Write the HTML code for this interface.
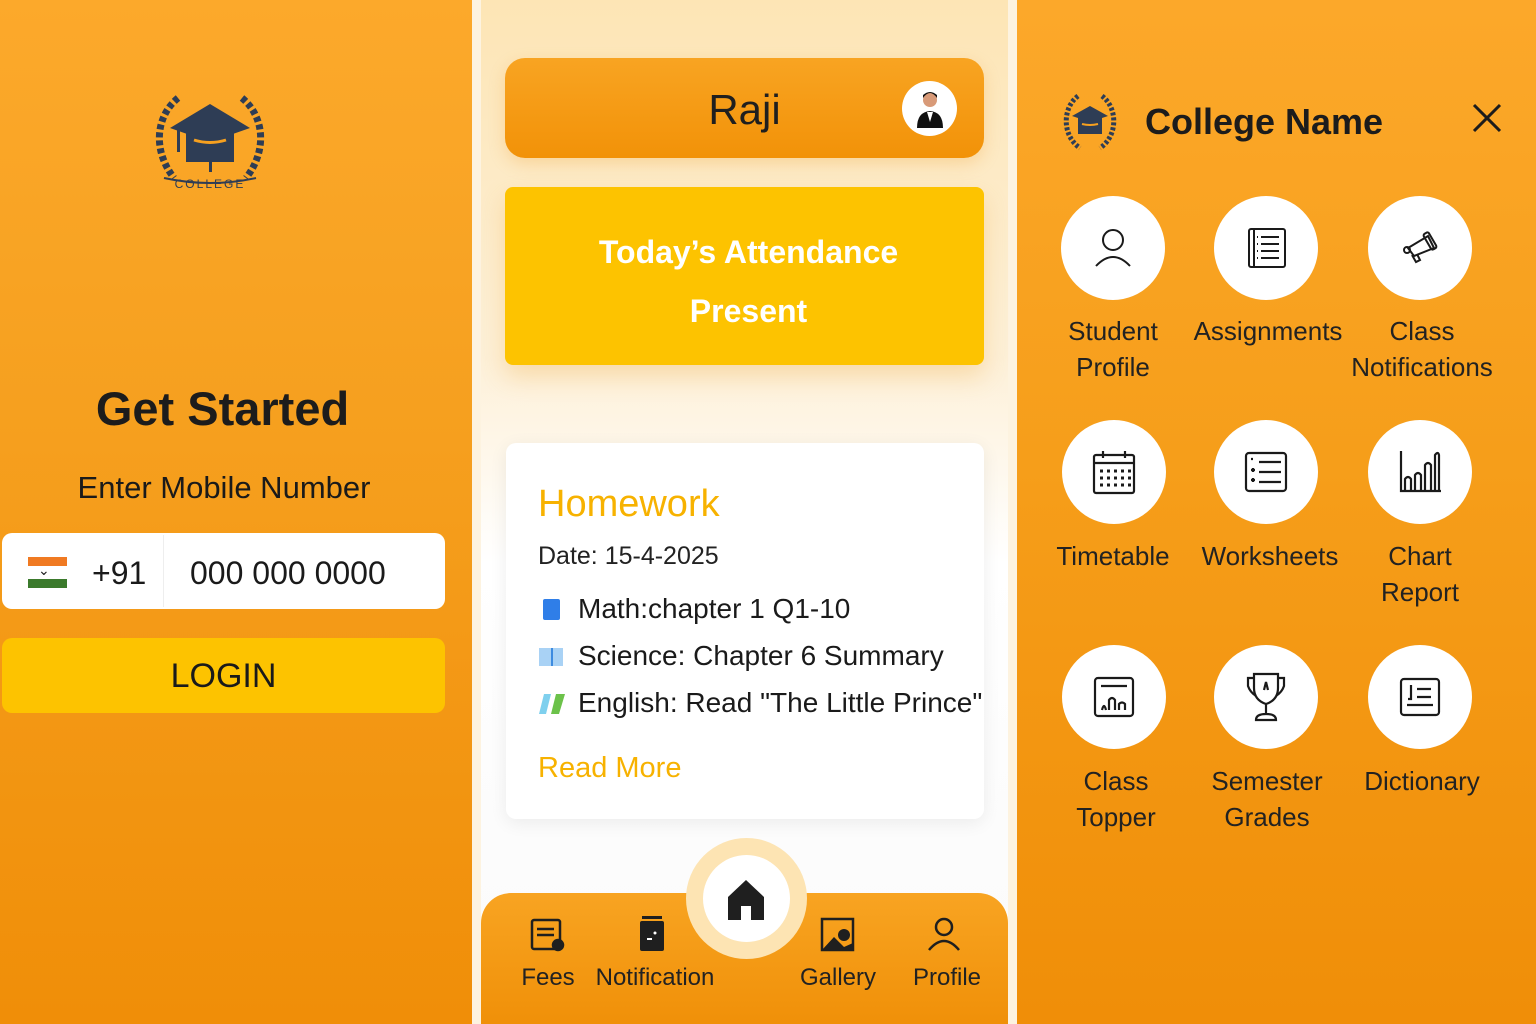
<!DOCTYPE html>
<html><head><meta charset="utf-8"><style>
*{margin:0;padding:0;box-sizing:border-box}
body{width:1536px;height:1024px;position:relative;overflow:hidden;background:#fdf3e0;font-family:"Liberation Sans",sans-serif;color:#1a1a1a}
.a{position:absolute}
.t{position:absolute;white-space:nowrap;text-align:center}
.p1{left:0;top:0;width:472px;height:1024px;background:linear-gradient(180deg,#fca92b 0%,#f6a01f 40%,#f08e08 100%)}
.p2{left:481px;top:0;width:527px;height:1024px;background:linear-gradient(180deg,#fde5b5 0%,#fdf0d8 35%,#ffffff 55%,#fafafa 100%)}
.p3{left:1017px;top:0;width:519px;height:1024px;background:linear-gradient(180deg,#fca82a 0%,#f69e1a 45%,#f08e08 100%)}
.c{position:absolute;width:104px;height:104px;border-radius:50%;background:#fff;display:flex;align-items:center;justify-content:center}
.lb{position:absolute;width:180px;text-align:center;font-size:26px;line-height:36px;color:#222}
.nv{position:absolute;font-size:24px;color:#222;text-align:center;width:130px}
</style></head><body>
<div class="a p1"></div>
<div class="a p2"></div>
<div class="a p3"></div>

<!-- LEFT -->
<svg class="a" style="left:148px;top:92px" width="124" height="104" viewBox="0 0 124 104">
 <g fill="none" stroke="#2e3d55" stroke-width="7" stroke-dasharray="5 3">
  <path d="M30 6 C8 24 4 58 26 86"/><path d="M94 6 C116 24 120 58 98 86"/>
 </g>
 <path d="M16 86 Q62 96 108 86" stroke="#2e3d55" stroke-width="2" fill="none"/>
 <polygon points="62,12 102,36 62,50 22,36" fill="#2e3d55"/>
 <rect x="38" y="38" width="48" height="32" fill="#2e3d55"/>
 <path d="M46 48 Q62 53 78 48" stroke="#f6a01f" stroke-width="3" fill="none"/>
 <rect x="29" y="38" width="3" height="22" fill="#2e3d55"/>
 <rect x="61" y="70" width="3" height="10" fill="#2e3d55"/>
 <text x="62" y="96" font-size="12" text-anchor="middle" fill="#2e3d55" font-family="Liberation Sans" letter-spacing="2">COLLEGE</text>
</svg>
<div class="t" style="left:0;width:445px;top:379px;font-size:47px;font-weight:bold;line-height:60px;color:#1c1c1c">Get Started</div>
<div class="t" style="left:0;width:448px;top:468px;font-size:31px;line-height:40px">Enter Mobile Number</div>
<div class="a" style="left:2px;top:533px;width:443px;height:76px;background:#fff;border-radius:10px"></div>
<div class="a" style="left:163px;top:535px;width:1px;height:72px;background:#eee"></div>
<div class="a" style="left:28px;top:557px;width:39px;height:9px;background:#f07a22"></div>
<div class="a" style="left:28px;top:579px;width:39px;height:9px;background:#3b7a2c"></div>
<div class="t" style="left:38px;top:562px;font-size:14px;line-height:16px">⌄</div>
<div class="t" style="left:92px;top:554px;font-size:32px;line-height:38px">+91</div>
<div class="t" style="left:190px;top:554px;font-size:32px;line-height:38px">000 000 0000</div>
<div class="a" style="left:2px;top:638px;width:443px;height:75px;background:#fdc300;border-radius:10px"></div>
<div class="t" style="left:2px;width:443px;top:656px;font-size:34px;line-height:40px">LOGIN</div>

<!-- MIDDLE -->
<div class="a" style="left:505px;top:58px;width:479px;height:100px;border-radius:20px;background:linear-gradient(180deg,#f8a422,#f29208);box-shadow:0 6px 16px rgba(240,150,30,.25)"></div>
<div class="t" style="left:505px;width:479px;top:85px;font-size:42px;line-height:50px;color:#1f1f1f">Raji</div>
<div class="a" style="left:902px;top:81px;width:55px;height:55px;border-radius:50%;background:#fff"></div>
<svg class="a" style="left:914px;top:88px" width="32" height="42" viewBox="0 0 32 42"><circle cx="16" cy="12" r="7" fill="#d89a78"/><path d="M9 10 Q16 0 23 10 L23 7 Q16 1 9 7Z" fill="#111"/><path d="M3 40 Q3 24 16 23 Q29 24 29 40Z" fill="#111"/><path d="M13 24 L16 34 L19 24Z" fill="#fff"/></svg>
<div class="a" style="left:505px;top:187px;width:479px;height:178px;background:#fdc300;border-radius:8px;box-shadow:0 12px 24px rgba(240,170,60,.3)"></div>
<div class="t" style="left:505px;width:487px;top:232px;font-size:32px;line-height:40px;color:#fff;font-weight:bold">Today’s Attendance</div>
<div class="t" style="left:505px;width:487px;top:291px;font-size:32px;line-height:40px;color:#fff;font-weight:bold">Present</div>
<div class="a" style="left:506px;top:443px;width:478px;height:376px;background:#fff;border-radius:10px;box-shadow:0 4px 18px rgba(0,0,0,.07)"></div>
<div class="t" style="left:538px;top:482px;font-size:38px;line-height:44px;color:#f7b200">Homework</div>
<div class="t" style="left:538px;top:541px;font-size:25px;line-height:30px;color:#222">Date: 15-4-2025</div>
<div class="a" style="left:543px;top:599px;width:17px;height:21px;background:#2f7ee8;border-radius:2px"></div>
<div class="a" style="left:539px;top:648px;width:24px;height:18px;background:#a9d2f5"></div>
<div class="a" style="left:551px;top:648px;width:2px;height:18px;background:#3d8be0"></div>
<svg class="a" style="left:539px;top:694px" width="26" height="20"><polygon points="5,0 12,0 7,20 0,20" fill="#7fd0ee"/><polygon points="17,0 26,0 20,20 12,20" fill="#6cc24a"/></svg>
<div class="t" style="left:578px;top:592px;font-size:28px;line-height:34px">Math:chapter 1 Q1-10</div>
<div class="t" style="left:578px;top:639px;font-size:28px;line-height:34px">Science: Chapter 6 Summary</div>
<div class="t" style="left:578px;top:686px;font-size:28px;line-height:34px">English: Read "The Little Prince"</div>
<div class="t" style="left:538px;top:751px;font-size:29px;line-height:34px;color:#f7b200">Read More</div>
<div class="a" style="left:481px;top:893px;width:527px;height:131px;border-radius:30px 30px 0 0;background:linear-gradient(180deg,#f8a422,#f09008)"></div>
<div class="a" style="left:686px;top:838px;width:121px;height:121px;border-radius:50%;background:#fde4b3"></div>
<div class="a" style="left:703px;top:855px;width:87px;height:87px;border-radius:50%;background:#fff"></div>
<svg class="a" style="left:727px;top:879px" width="38" height="42" viewBox="0 0 38 42"><path d="M19 1 L37 18 L37 41 L24 41 L24 27 L14 27 L14 41 L1 41 L1 18Z" fill="#1f1f1f"/></svg>
<svg class="a" style="left:530px;top:918px" width="36" height="34" viewBox="0 0 36 34" fill="none" stroke="#1f1f1f" stroke-width="2.5"><rect x="2" y="2" width="28" height="29" rx="2"/><path d="M7 11H24M7 17H24"/><circle cx="28" cy="27" r="5" fill="#1f1f1f"/></svg>
<svg class="a" style="left:638px;top:914px" width="28" height="38" viewBox="0 0 28 38"><rect x="4" y="2" width="20" height="3" fill="#1f1f1f"/><rect x="2" y="7" width="24" height="30" rx="2" fill="#1f1f1f"/><rect x="9" y="24" width="5" height="2" fill="#fff"/><circle cx="17" cy="19" r="1.5" fill="#fff"/></svg>
<svg class="a" style="left:820px;top:917px" width="36" height="36" viewBox="0 0 36 36"><rect x="2" y="2" width="31" height="31" fill="none" stroke="#1f1f1f" stroke-width="2.5"/><circle cx="24" cy="18" r="6" fill="#1f1f1f"/><path d="M2 33 L14 20 L24 30 L33 26 L33 33Z" fill="#1f1f1f"/></svg>
<svg class="a" style="left:926px;top:916px" width="36" height="36" viewBox="0 0 36 36" fill="none" stroke="#1f1f1f" stroke-width="2.5"><circle cx="18" cy="11" r="8"/><path d="M3 34 Q18 16 33 34"/></svg>
<div class="nv" style="left:483px;top:964px">Fees</div>
<div class="nv" style="left:590px;top:964px">Notification</div>
<div class="nv" style="left:773px;top:964px">Gallery</div>
<div class="nv" style="left:882px;top:964px">Profile</div>

<!-- RIGHT -->
<svg class="a" style="left:1060px;top:92px" width="60" height="60" viewBox="0 0 60 60">
 <g fill="none" stroke="#2e3d55" stroke-width="5" stroke-dasharray="3 2"><path d="M18 4 C2 16 2 44 20 56"/><path d="M42 4 C58 16 58 44 40 56"/></g>
 <polygon points="30,14 48,24 30,30 12,24" fill="#2e3d55"/><rect x="18" y="26" width="24" height="16" fill="#2e3d55"/>
 <path d="M22 32 Q30 34 38 32" stroke="#f6a01f" stroke-width="2" fill="none"/>
</svg>
<div class="t" style="left:1145px;top:100px;font-size:36px;line-height:44px;font-weight:bold;color:#1c1c1c">College Name</div>
<svg class="a" style="left:1472px;top:103px" width="30" height="30" stroke="#1c1c1c" stroke-width="3"><path d="M2 2L28 28M28 2L2 28"/></svg>

<div class="c" style="left:1061px;top:196px"><svg width="44" height="44" viewBox="0 0 44 44" fill="none" stroke="#1a1a1a" stroke-width="2"><circle cx="22" cy="14" r="10"/><path d="M5 40 Q22 22 39 40"/></svg></div>
<div class="c" style="left:1214px;top:196px"><svg width="44" height="44" viewBox="0 0 44 44" fill="none" stroke="#1a1a1a" stroke-width="2"><rect x="5" y="3" width="36" height="38" rx="2"/><path d="M10 3V41M17 11H35M17 18H35M17 25H35M17 32H35M13 11h1M13 18h1M13 25h1M13 32h1"/></svg></div>
<div class="c" style="left:1368px;top:196px"><svg width="44" height="44" viewBox="0 0 44 44" fill="none" stroke="#1a1a1a" stroke-width="2"><path d="M10 22 L30 10 L36 22 L16 30Z"/><rect x="29" y="6" width="6" height="18" rx="2" transform="rotate(-30 32 15)"/><path d="M14 29 L18 36 L22 34 L19 28"/><circle cx="9" cy="24" r="3"/></svg></div>
<div class="lb" style="left:1023px;top:313px">Student<br>Profile</div>
<div class="lb" style="left:1178px;top:313px">Assignments</div>
<div class="lb" style="left:1332px;top:313px">Class<br>Notifications</div>

<div class="c" style="left:1062px;top:420px"><svg width="46" height="46" viewBox="0 0 46 46" fill="none" stroke="#1a1a1a" stroke-width="2.2"><rect x="3" y="6" width="40" height="38" rx="2"/><path d="M3 14H43M12 2V9M34 2V9"/><g stroke-width="3" stroke-dasharray="3 4"><path d="M9 22H40M9 29H40M9 36H40"/></g></svg></div>
<div class="c" style="left:1214px;top:420px"><svg width="46" height="46" viewBox="0 0 46 46" fill="none" stroke="#1a1a1a" stroke-width="2.2"><rect x="3" y="4" width="40" height="38" rx="3"/><path d="M16 13H38M16 23H38M16 33H38M8 21h4M10 19v4M8 31h4M10 29v4M8 10h2"/></svg></div>
<div class="c" style="left:1368px;top:420px"><svg width="46" height="46" viewBox="0 0 46 46" fill="none" stroke="#1a1a1a" stroke-width="2.2"><path d="M4 2V42H44"/><path d="M8 42V30Q11 26 14 30V42M18 42V26Q21 22 24 26V42M28 42V16Q31 12 34 16V42M38 42V6Q41 2 42 6V42"/></svg></div>
<div class="lb" style="left:1023px;top:538px">Timetable</div>
<div class="lb" style="left:1180px;top:538px">Worksheets</div>
<div class="lb" style="left:1330px;top:538px">Chart<br>Report</div>

<div class="c" style="left:1062px;top:645px"><svg width="42" height="42" viewBox="0 0 42 42" fill="none" stroke="#1a1a1a" stroke-width="2.2"><rect x="2" y="2" width="38" height="38" rx="3"/><path d="M8 10H34M9 34Q11 26 13 34M16 34V24Q19 20 22 24V34M26 34V28Q29 25 32 28V34"/></svg></div>
<div class="c" style="left:1214px;top:645px"><svg width="44" height="50" viewBox="0 0 44 50" fill="none" stroke="#1a1a1a" stroke-width="2.2"><path d="M10 2H34V16Q34 28 22 32Q10 28 10 16Z"/><path d="M10 6H4V14Q6 20 12 24M34 6H40V14Q38 20 32 24M22 32V42M12 48Q12 42 22 42Q32 42 32 48Z"/><path d="M20 18L22 10L24 18"/></svg></div>
<div class="c" style="left:1368px;top:645px"><svg width="42" height="40" viewBox="0 0 42 40" fill="none" stroke="#1a1a1a" stroke-width="2.2"><rect x="2" y="2" width="38" height="36" rx="3"/><path d="M12 8V22H9M18 12H32M18 20H32M8 28H34"/></svg></div>
<div class="lb" style="left:1026px;top:763px">Class<br>Topper</div>
<div class="lb" style="left:1177px;top:763px">Semester<br>Grades</div>
<div class="lb" style="left:1332px;top:763px">Dictionary</div>
</body></html>
